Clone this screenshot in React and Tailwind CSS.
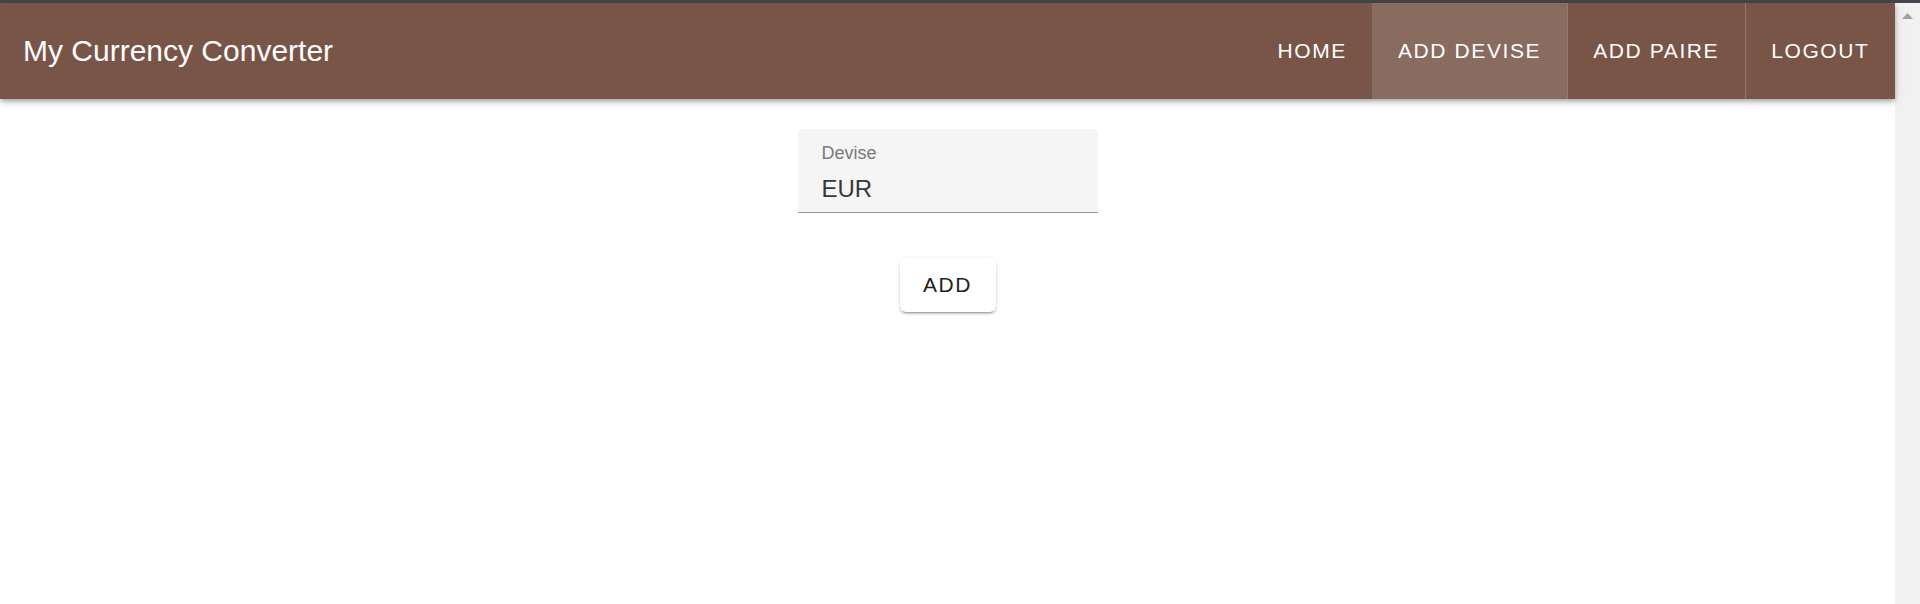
import React, { useState } from 'react';

const navItems = ['HOME', 'ADD DEVISE', 'ADD PAIRE', 'LOGOUT'];

const NavBar = ({ active }) => (
  <header className="relative z-10 flex h-[96px] items-center justify-between bg-[#795548] shadow-[0_2px_4px_-1px_rgba(0,0,0,0.2),0_4px_5px_0_rgba(0,0,0,0.14),0_1px_10px_0_rgba(0,0,0,0.12)]">
    <h1 className="pl-[23px] text-[30px] font-normal leading-none text-white">My Currency Converter</h1>
    <nav className="flex h-full">
      {navItems.map((item, i) => (
        <a
          key={item}
          href="#"
          className={
            'flex h-full items-center px-[25.5px] text-[21px] tracking-[1.6px] text-white ' +
            (item === active ? 'bg-[#8a6b60] ' : '') +
            (i > 1 ? 'border-l border-[#94776c]' : '')
          }
        >
          {item}
        </a>
      ))}
    </nav>
  </header>
);

const App = () => {
  const [devise, setDevise] = useState('EUR');

  return (
    <div className="flex h-[604px] flex-col overflow-hidden bg-white font-['Liberation_Sans',Arial,sans-serif]">
      <div className="h-[3px] bg-[#45464d]" />
      <div className="flex flex-1">
        <div className="flex flex-1 flex-col">
          <NavBar active="ADD DEVISE" />
          <main className="flex flex-col items-center pt-[30px]">
            <label className="flex h-[84px] w-[300px] flex-col rounded-t-[5px] border-b border-[#949494] bg-[#f5f5f5] px-[24px] pt-[15px]">
              <span className="text-[18px] leading-none text-[#7a7a7a]">Devise</span>
              <input
                value={devise}
                onChange={e => setDevise(e.target.value)}
                className="mt-[13px] bg-transparent text-[24px] leading-none text-[#383838] outline-none"
              />
            </label>
            <button className="mt-[45px] h-[54px] w-[96px] rounded-[6px] bg-white text-[21px] tracking-[1.6px] text-[#1f1f1f] shadow-[0_3px_1px_-2px_rgba(0,0,0,0.2),0_2px_2px_0_rgba(0,0,0,0.14),0_1px_5px_0_rgba(0,0,0,0.12)]">
              ADD
            </button>
          </main>
        </div>
        <div className="flex w-[25px] justify-center bg-[#f1f1f1] pt-[10px]">
          <svg width="11" height="6" viewBox="0 0 11 6">
            <path d="M5.5 0 L11 6 L0 6 Z" fill="#a3a3a3" />
          </svg>
        </div>
      </div>
    </div>
  );
};

export default App;
